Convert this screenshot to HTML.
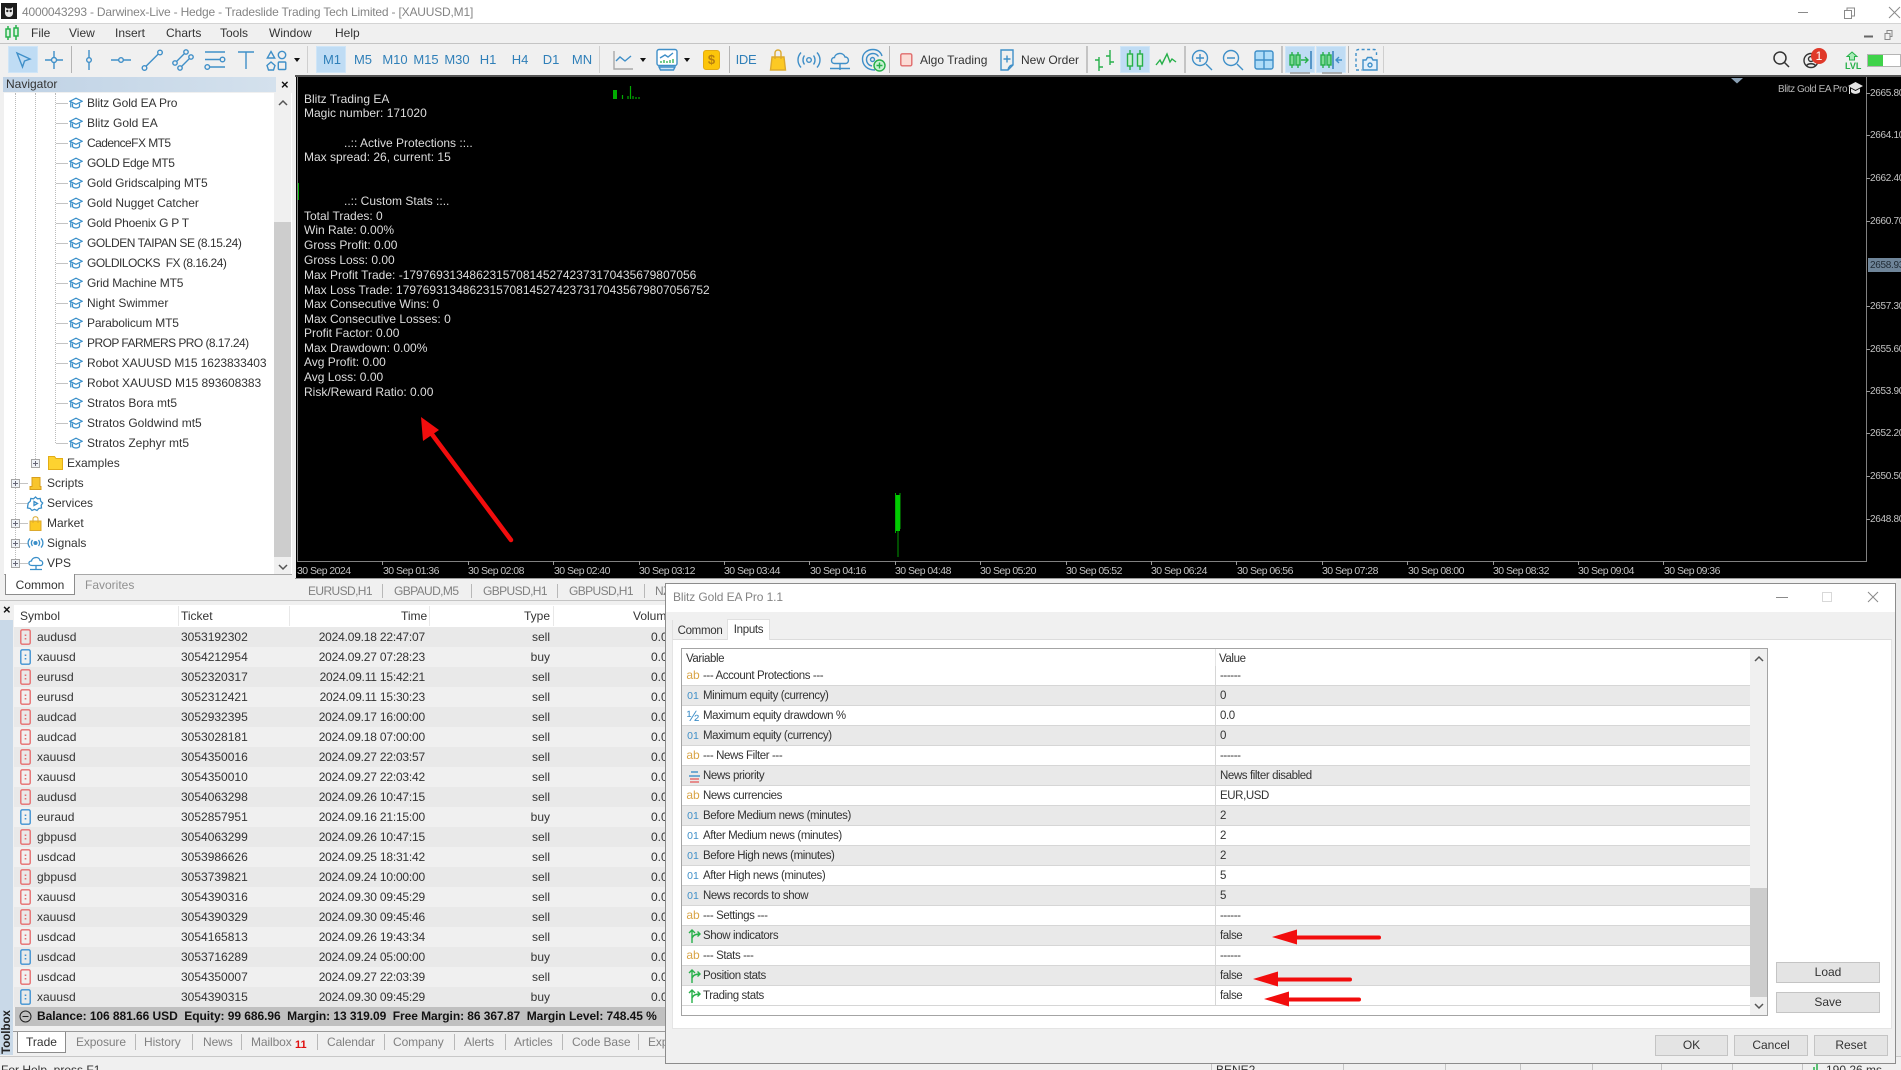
<!DOCTYPE html>
<html><head><meta charset="utf-8"><title>Darwinex-Live</title>
<style>
html,body{margin:0;padding:0;width:1901px;height:1070px;overflow:hidden;background:#f0f0f0}
body{position:relative;font:12px "Liberation Sans",sans-serif;color:#333}
.a,.t,svg.i,svg.j{position:absolute}
.t{white-space:pre;line-height:14px}
svg{overflow:visible}
svg.i{top:48px;width:24px;height:24px;fill:none;stroke:#3f8fc8;stroke-width:1.4}
svg.j{fill:none}
.tf{position:absolute;top:52px;color:#2f7fb8;font-size:13px;line-height:16px;transform:translateX(-50%)}
.m{position:absolute;top:26px;line-height:14px;color:#333}
.hl{position:absolute;top:46px;height:27px;background:#bfdcf4;border:1px solid #cfe5f7;box-sizing:border-box}
.sp{position:absolute;top:46px;height:27px;width:1px;background:#b4b4b4}
.dd{position:absolute;top:58px;width:0;height:0;border:3.5px solid transparent;border-top:4.5px solid #111;border-bottom:0}
.n{position:absolute;left:87px;line-height:14px;white-space:pre;color:#333}
.c{position:absolute;left:69px;width:14px;height:14px;fill:none;stroke:#3a8fc9;stroke-width:1.4}
.ct{position:absolute;left:304px;color:#ddd;line-height:14px;white-space:pre}
.pr{position:absolute;left:1870px;color:#c4c4c4;font-size:10px;letter-spacing:-.3px;line-height:14px;margin-top:1px}
.tk{position:absolute;left:1866px;width:4px;height:1px;background:#999}
.tm{position:absolute;top:564px;color:#c4c4c4;font-size:10.5px;letter-spacing:-.55px;line-height:14px;white-space:pre}
.tv{position:absolute;top:561px;width:1px;height:4px;background:#999}
.ctab{position:absolute;top:584px;color:#808080;line-height:14px;letter-spacing:-.6px}
.cs{position:absolute;top:584px;width:1px;height:14px;background:#b8b8b8}
#tr{position:absolute;left:14px;top:627px;width:660px}
#tr div{position:relative;height:20px;line-height:20px}
#tr div:nth-child(odd){background:#e9e9e9}
#tr svg{position:absolute;left:6px;top:2px;width:11px;height:16px;fill:none;stroke-width:1.4}
#tr .r{stroke:#e66e6e}#tr .b{stroke:#3f92d2}
#tr b,#tr i,#tr u,#tr s,#tr em{position:absolute;font:inherit;text-decoration:none;white-space:pre}
#tr b{left:23px}#tr i{left:167px}#tr u{right:249px;letter-spacing:-.2px}#tr s{right:124px}#tr em{left:637px}
.h{position:absolute;top:609px;line-height:14px;color:#333}
.hs{position:absolute;top:606px;height:20px;width:1px;background:#e8e8e8}
.bt{position:absolute;top:1035px;color:#808080;line-height:14px;letter-spacing:-.1px}
.bs{position:absolute;top:1034px;height:16px;width:1px;background:#b8b8b8}
.st{position:absolute;top:1058px;height:12px;width:1px;background:#c4c4c4}
#dl{position:absolute;left:665px;top:583px;width:1231px;height:481px;background:#f0f0f0;border:1px solid #8c8c8c;box-sizing:border-box}
#rw{position:absolute;left:682px;top:666px;width:1068px}
#rw div{position:relative;height:19px;line-height:21px;border-bottom:1px solid #d6d6d6;color:#333;white-space:pre;font-size:11.5px;letter-spacing:-.4px}
#rw div:nth-child(even){background:#e9e9e9}
#rw span.v{position:absolute;left:533px;top:0;height:20px;border-left:1px solid #d6d6d6;padding-left:4px;width:500px}
#rw span.n2{position:absolute;left:21px;top:0}
#rw span.q{position:absolute;left:4px;top:0;width:14px;font-size:12px;text-align:center;letter-spacing:0}
#rw span.ab{color:#d9a548;font-size:12px;line-height:19px}
#rw span.o1{color:#3f8fc8;font-size:10.5px}
#rw svg{position:absolute;left:5px;top:2px;width:15px;height:16px;fill:none;stroke:#27b04a;stroke-width:1.4}
.btn{position:absolute;background:#e4e4e4;border:1px solid #c4c4c4;box-sizing:border-box;text-align:center;color:#333}
</style></head><body>

<svg width="0" height="0" style="position:absolute"><defs>
<symbol id="cap" viewBox="0 0 16 16"><path d="M1 6L8 2.5 15 6 8 9.5Z"/><path d="M4 8.5v3.7c2 2 6 2 8 0V8.500"/><path d="M2 7v6"/></symbol>
<symbol id="ord" viewBox="0 0 11 16"><rect x=".8" y=".8" width="9.400" height="14.400" rx="1.500"/><path d="M5.500 5.500v1.500M5.500 9v1.500" stroke-width="1.600"/></symbol>
<symbol id="bl" viewBox="0 0 15 16"><path d="M5 15V2M2 5l3-3 3 3"/><path d="M5 10C6 7 9 6 13 6M10.500 3.500L13 6l-2.500 2.500"/></symbol>
<symbol id="pl" viewBox="0 0 9 9"><rect x=".5" y=".5" width="8" height="8" fill="#eef2f7" stroke="#a6a6a6"/><path d="M2 4.500h5M4.500 2v5" stroke="#667"/></symbol>
</defs></svg>

<!-- title bar -->
<div class="a" style="left:0;top:0;width:1901px;height:23px;background:#fff;border-bottom:1px solid #d4d4d4"></div>
<svg class="j" style="left:1px;top:3px" width="16" height="16" viewBox="0 0 16 16"><rect width="16" height="16" fill="#1c1c1c"/><path d="M4 4l2 1.500h4L12 4v6c0 2.500-2 4-4 4s-4-1.500-4-4z" fill="#e8e8e8"/><circle cx="6.300" cy="8" r="1.200" fill="#222"/><circle cx="9.700" cy="8" r="1.200" fill="#222"/></svg>
<div class="t" style="left:22px;top:5px;color:#848484;letter-spacing:-.19px">4000043293 - Darwinex-Live - Hedge - Tradeslide Trading Tech Limited - [XAUUSD,M1]</div>
<svg class="j" style="left:1797px;top:3px" width="104" height="18" stroke="#8a8a8a" stroke-width="1"><path d="M1 9.500h10M47.500 7.500h7v8h-7zM50 7.500v-2.500h7.500v8h-3M92 4l11 11M103 4L92 15"/></svg>

<!-- menu -->
<div class="a" style="left:0;top:43px;width:1901px;height:1px;background:#c4c4c4"></div>
<svg class="j" style="left:4px;top:25px" width="16" height="16" fill="none" stroke="#28b14c" stroke-width="1.500"><path d="M4 1v14M12 0v15"/><rect x="2" y="4" width="4" height="8" fill="#d8f5de"/><rect x="10" y="3" width="4" height="8" fill="#d8f5de"/></svg>
<div class="m" style="left:31px">File</div><div class="m" style="left:69px">View</div><div class="m" style="left:115px">Insert</div><div class="m" style="left:166px">Charts</div><div class="m" style="left:220px">Tools</div><div class="m" style="left:269px">Window</div><div class="m" style="left:335px">Help</div>
<svg class="j" style="left:1863px;top:28px" width="34" height="14" stroke="#666"><path d="M1 8.500h9" stroke-width="2"/><path d="M22 5.500h5v6h-5zM24 5.500v-3h5v6h-2" stroke="#888" stroke-width="1"/></svg>

<!-- toolbar -->
<div class="hl" style="left:8px;width:30px"></div>
<div class="hl" style="left:316px;width:30px"></div>
<div class="hl" style="left:1120px;width:30px"></div>
<div class="hl" style="left:1285px;width:30px"></div>
<div class="hl" style="left:1316px;width:30px"></div>
<div class="sp" style="left:71px"></div><div class="sp" style="left:307px;background:#cfcfcf"></div><div class="sp" style="left:599px;background:#cfcfcf"></div><div class="sp" style="left:729px"></div><div class="sp" style="left:889px"></div><div class="sp" style="left:1086px;background:#c4c4c4;width:2px"></div><div class="sp" style="left:1184px;background:#c4c4c4;width:2px"></div><div class="sp" style="left:1281px;background:#c4c4c4;width:2px"></div><div class="sp" style="left:1348px"></div><div class="sp" style="left:1383px;background:#cfcfcf"></div>

<svg class="i" style="left:11px" viewBox="0 0 24 24"><path d="M6 5l13 6-5.500 2-2 6z"/></svg>
<svg class="i" style="left:42px" viewBox="0 0 24 24"><circle cx="12" cy="12" r="2.500"/><path d="M12 3v6.500M12 14.500V21M3 12h6.500M14.500 12H21"/></svg>
<svg class="i" style="left:77px" viewBox="0 0 24 24"><circle cx="12" cy="12" r="2.300"/><path d="M12 2v7.700M12 14.300V22"/></svg>
<svg class="i" style="left:109px" viewBox="0 0 24 24"><circle cx="12" cy="12" r="2.300"/><path d="M2 12h7.700M14.300 12H22"/></svg>
<svg class="i" style="left:140px" viewBox="0 0 24 24"><circle cx="4.500" cy="20" r="2.300"/><circle cx="20" cy="4.500" r="2.300"/><path d="M6 18.300L18.300 6"/></svg>
<svg class="i" style="left:171px" viewBox="0 0 24 24"><circle cx="4" cy="15" r="2.200"/><circle cx="15" cy="4" r="2.200"/><circle cx="9" cy="20" r="2.200"/><circle cx="20" cy="9" r="2.200"/><path d="M5.500 13.500L13.500 5.500M10.500 18.500L18.500 10.500"/></svg>
<svg class="i" style="left:203px" viewBox="0 0 24 24"><path d="M2 4h20M2 11.500h15M7 19h15"/><circle cx="19.500" cy="11.500" r="2.300"/><circle cx="4.300" cy="19" r="2.300"/></svg>
<svg class="i" style="left:234px" viewBox="0 0 24 24"><path d="M4 4h16M12 4v17"/></svg>
<svg class="i" style="left:264px" viewBox="0 0 24 24"><path d="M7 3.500l3.700 6.500H3.300z"/><circle cx="18" cy="7" r="3.700"/><path d="M7 14l4 3.500-1.500 4.500h-5L3 17.500z"/><rect x="14.300" y="14" width="7.500" height="7.500" rx="1"/></svg>
<div class="dd" style="left:294px"></div>

<div class="tf" style="left:332px">M1</div><div class="tf" style="left:363px">M5</div><div class="tf" style="left:395px">M10</div><div class="tf" style="left:426px">M15</div><div class="tf" style="left:457px">M30</div><div class="tf" style="left:488px">H1</div><div class="tf" style="left:520px">H4</div><div class="tf" style="left:551px">D1</div><div class="tf" style="left:582px">MN</div>

<svg class="i" style="left:612px;stroke:#a8a8a8" viewBox="0 0 24 24"><path d="M2 3v18h19"/><path d="M4 13l4-4 5 4 6-5" stroke="#3f8fc8"/></svg>
<div class="dd" style="left:640px"></div>
<svg class="i" style="left:655px" viewBox="0 0 24 24"><rect x="2" y="1.500" width="20" height="16" rx="2" fill="#fff"/><path d="M4 19h16l-1.500 3h-13z" fill="#cfe4f5"/><path d="M5 10l5-3 3 2 5-4" stroke="#3f8fc8"/><path d="M6 15v-2M9 15v-3M12 15v-2M15 15v-3M18 15v-4" stroke="#38b75a"/></svg>
<div class="dd" style="left:684px"></div>
<svg class="j" style="left:703px;top:50px" width="17" height="20"><rect x=".5" y=".5" width="16" height="19" rx="2.500" fill="#fcc50a" stroke="#e4ab12"/></svg>
<div class="a" style="left:703px;width:17px;top:52px;text-align:center;color:#b67e10;font-weight:bold;font-size:13px;line-height:16px">$</div>
<div class="tf" style="left:746px;font-size:13px;letter-spacing:-.3px">IDE</div>
<svg class="i" style="left:766px;stroke:#dca92d" viewBox="0 0 24 24"><path d="M6 9h12l1.500 13h-15z" fill="#fcc924"/><path d="M9 11V5c0-4 6-4 6 0v6"/></svg>
<svg class="i" style="left:797px" viewBox="0 0 24 24"><circle cx="12" cy="12" r="2.300"/><path d="M7.500 7.500c-2 2.500-2 6.500 0 9M16.500 7.500c2 2.500 2 6.500 0 9M4 4.500c-4 4.500-4 10.500 0 15M20 4.500c4 4.500 4 10.500 0 15"/></svg>
<svg class="i" style="left:828px" viewBox="0 0 24 24"><path d="M6.500 15.500C2.500 15.500 2.500 9.500 6.500 9.500 7 5 15 3.500 17 9c4.500 0 4.500 6.500.5 6.500z"/><path d="M12 15.500V22M2 20.500h20"/></svg>
<svg class="i" style="left:861px" viewBox="0 0 24 24"><path d="M14 22C6 22 1.500 17 1.500 11 1.500 5 6.500 1.500 12 1.500c5 0 8 3 9 6.500M11 18c-3.500-.5-5.500-3.500-5.500-6.500C5.500 8 8.500 5.500 12 5.500c3 0 4.500 1.500 5.500 3"/><circle cx="11.500" cy="11.500" r="2"/><circle cx="18.500" cy="17.500" r="5.500" fill="#c9f2d3" stroke="#27b04a"/><path d="M18.500 14.500v6M15.500 17.500h6" stroke="#27b04a"/></svg>
<svg class="j" style="left:900px;top:53px" width="13" height="14"><rect x=".8" y=".8" width="11" height="12" rx="1.500" fill="#fbdcd6" stroke="#e06c6c" stroke-width="1.400"/></svg>
<div class="t" style="left:920px;top:53px">Algo Trading</div>
<svg class="i" style="left:995px" viewBox="0 0 24 24"><path d="M6 2h12v15l-5 5H6z"/><path d="M13 22c.5-3 2-5 5-5" /><path d="M12 7.500v7M8.500 11h7"/></svg>
<div class="t" style="left:1021px;top:53px">New Order</div>
<svg class="i" style="left:1092px;stroke:#27b04a" viewBox="0 0 24 24"><path d="M7 9v14M7 12H3M7 19h4M18 2v15M14 8h4M18 14h4"/></svg>
<svg class="i" style="left:1123px;stroke:#27b04a" viewBox="0 0 24 24"><path d="M7 2v20M17 2v20"/><rect x="4.500" y="6" width="5" height="12" fill="#c8f0d2"/><rect x="14.500" y="6" width="5" height="12" fill="#c8f0d2"/></svg>
<svg class="i" style="left:1154px;stroke:#27b04a" viewBox="0 0 24 24"><path d="M2 17l4-5 2 4 5-10 3 8 2-3 4 3"/></svg>
<svg class="i" style="left:1190px" viewBox="0 0 24 24"><circle cx="10" cy="10" r="7.500"/><path d="M16 16l6 6M6 10h8M10 6v8"/></svg>
<svg class="i" style="left:1221px" viewBox="0 0 24 24"><circle cx="10" cy="10" r="7.500"/><path d="M16 16l6 6M6 10h8"/></svg>
<svg class="i" style="left:1252px" viewBox="0 0 24 24"><rect x="3" y="3" width="18" height="18" rx="2" fill="#aedcf8"/><path d="M12 3v18M3 12h18"/></svg>
<svg class="i" style="left:1288px" viewBox="0 0 24 24"><path d="M4 4v16M10 4v16" stroke="#27b04a"/><rect x="2" y="7" width="4" height="10" fill="#7ddb95" stroke="#27b04a"/><rect x="8" y="7" width="4" height="10" fill="#7ddb95" stroke="#27b04a"/><path d="M13 12h7M17 9l3 3-3 3" stroke="#27b04a"/><path d="M23 3v18" stroke="#2b78b5"/><path d="M2 25h20" stroke="#999"/></svg>
<svg class="i" style="left:1319px" viewBox="0 0 24 24"><path d="M4 4v16M10 4v16" stroke="#27b04a"/><rect x="2" y="7" width="4" height="10" fill="#7ddb95" stroke="#27b04a"/><rect x="8" y="7" width="4" height="10" fill="#7ddb95" stroke="#27b04a"/><path d="M14 3v18" stroke="#2b78b5"/><path d="M23 12h-6M20 9l-3 3 3 3"/><path d="M3 25h20" stroke="#999"/></svg>
<svg class="i" style="left:1355px" viewBox="0 0 24 24"><path d="M1 19V4c0-1.500 1-2.500 2.500-2.500H19c1.500 0 2.500 1 2.500 2.500v3M1 22h6" stroke-dasharray="3 2.500"/><path d="M8 12h3l1.500-2.500h4L18 12h4v10H8z" fill="#e2f0fb"/><circle cx="15" cy="17" r="2"/></svg>

<svg class="j" style="left:1772px;top:50px" width="20" height="20" stroke="#333" stroke-width="1.500"><circle cx="8" cy="8" r="6"/><path d="M12.500 12.500L17 17"/></svg>
<svg class="j" style="left:1802px;top:52px" width="18" height="18" stroke="#333" stroke-width="1.400"><circle cx="9" cy="8.500" r="7"/><circle cx="9" cy="7" r="2.500"/><path d="M4.500 14c1-3 8-3 9 0"/></svg>
<div class="a" style="left:1811px;top:48px;width:16px;height:16px;border-radius:50%;background:#e0392a;color:#fff;text-align:center;line-height:16px;font-size:12px">1</div>
<svg class="j" style="left:1846px;top:51px" width="12" height="10"><path d="M6 1L11 5.500H8.500V9h-5V5.500H1z" fill="#a9ecb8" stroke="#27b04a"/></svg>
<div class="a" style="left:1845px;top:61px;color:#27b04a;font-size:9px;font-weight:bold;line-height:10px">LVL</div>
<div class="a" style="left:1867px;top:54px;width:34px;height:13px;background:#fff;border:1px solid #b4b4b4;box-sizing:border-box"><div style="width:15px;height:11px;background:#3fd34a"></div></div>

<!-- navigator -->
<div class="a" style="left:3px;top:77px;width:273px;height:15px;background:linear-gradient(to right,#bfd2e5,#d4e1ed)"></div>
<div class="t" style="left:6px;top:77px;color:#333">Navigator</div>
<div class="a" style="left:281px;top:78px;font-weight:bold;font-size:13px;line-height:14px;color:#111">×</div>
<div class="a" style="left:4px;top:93px;width:288px;height:481px;background:#fff"></div>
<div class="a" style="left:15px;top:93px;height:470px;border-left:1px dotted #bbb"></div>
<div class="a" style="left:35px;top:93px;height:370px;border-left:1px dotted #bbb"></div>
<div class="a" style="left:55px;top:93px;height:350px;border-left:1px dotted #bbb"></div>
<div class="a" style="left:56px;top:93px;width:12px;height:360px;background:repeating-linear-gradient(to bottom,transparent 0 10px,#c4c4c4 10px 11px,transparent 11px 20px)"></div>
<div class="a" style="left:16px;top:473px;width:12px;height:100px;background:repeating-linear-gradient(to bottom,transparent 0 10px,#c4c4c4 10px 11px,transparent 11px 20px)"></div>

<div class="n" style="top:96px;letter-spacing:-.1px">Blitz Gold EA Pro</div><svg class="c" style="top:96px"><use href="#cap"/></svg>
<div class="n" style="top:116px">Blitz Gold EA</div><svg class="c" style="top:116px"><use href="#cap"/></svg>
<div class="n" style="top:136px;letter-spacing:-.55px">CadenceFX MT5</div><svg class="c" style="top:136px"><use href="#cap"/></svg>
<div class="n" style="top:156px;letter-spacing:-.4px">GOLD Edge MT5</div><svg class="c" style="top:156px"><use href="#cap"/></svg>
<div class="n" style="top:176px;letter-spacing:-.1px">Gold Gridscalping MT5</div><svg class="c" style="top:176px"><use href="#cap"/></svg>
<div class="n" style="top:196px;letter-spacing:-.05px">Gold Nugget Catcher</div><svg class="c" style="top:196px"><use href="#cap"/></svg>
<div class="n" style="top:216px;letter-spacing:-.25px">Gold Phoenix G P T</div><svg class="c" style="top:216px"><use href="#cap"/></svg>
<div class="n" style="top:236px;letter-spacing:-.45px">GOLDEN TAIPAN SE (8.15.24)</div><svg class="c" style="top:236px"><use href="#cap"/></svg>
<div class="n" style="top:256px;letter-spacing:-.5px">GOLDILOCKS  FX (8.16.24)</div><svg class="c" style="top:256px"><use href="#cap"/></svg>
<div class="n" style="top:276px;letter-spacing:-.15px">Grid Machine MT5</div><svg class="c" style="top:276px"><use href="#cap"/></svg>
<div class="n" style="top:296px">Night Swimmer</div><svg class="c" style="top:296px"><use href="#cap"/></svg>
<div class="n" style="top:316px;letter-spacing:-.15px">Parabolicum MT5</div><svg class="c" style="top:316px"><use href="#cap"/></svg>
<div class="n" style="top:336px;letter-spacing:-.55px">PROP FARMERS PRO (8.17.24)</div><svg class="c" style="top:336px"><use href="#cap"/></svg>
<div class="n" style="top:356px;letter-spacing:-.1px">Robot XAUUSD M15 1623833403</div><svg class="c" style="top:356px"><use href="#cap"/></svg>
<div class="n" style="top:376px;letter-spacing:-.05px">Robot XAUUSD M15 893608383</div><svg class="c" style="top:376px"><use href="#cap"/></svg>
<div class="n" style="top:396px">Stratos Bora mt5</div><svg class="c" style="top:396px"><use href="#cap"/></svg>
<div class="n" style="top:416px">Stratos Goldwind mt5</div><svg class="c" style="top:416px"><use href="#cap"/></svg>
<div class="n" style="top:436px">Stratos Zephyr mt5</div><svg class="c" style="top:436px"><use href="#cap"/></svg>

<svg class="j" style="left:31px;top:459px" width="9" height="9"><use href="#pl"/></svg>
<svg class="j" style="left:48px;top:456px" width="15" height="14"><path d="M.5 13.500V.5h6l1.500 2h6.500v11z" fill="#fdd230" stroke="#e3ad16"/></svg>
<div class="n" style="left:67px;top:456px">Examples</div>
<svg class="j" style="left:11px;top:479px" width="9" height="9"><use href="#pl"/></svg>
<svg class="j" style="left:29px;top:477px" width="13" height="13"><path d="M3 .5h8v9h1v3H1v-3h2z" fill="#f8c52c" stroke="#d89f1c"/></svg>
<div class="n" style="left:47px;top:476px">Scripts</div>
<svg class="j" style="left:28px;top:496px" width="15" height="15" stroke="#3a8fc9" stroke-width="1.300"><path d="M7.500 1l2 1.800 2.700-.3.500 2.700 2 1.800-1.500 2.300.3 2.700-2.700.5-1.800 2-2.500-1.200-2.500 1.200-1.800-2-2.700-.5.300-2.700L.3 7 2.300 5.200l.5-2.700 2.700.3z"/><path d="M6 5.500l3.500 2L6 9.500z"/></svg>
<div class="n" style="left:47px;top:496px">Services</div>
<svg class="j" style="left:11px;top:519px" width="9" height="9"><use href="#pl"/></svg>
<svg class="j" style="left:29px;top:516px" width="13" height="15"><path d="M1 5h11v9.500H1z" fill="#fcc924" stroke="#dca92d"/><path d="M4 7V3c0-3 5-3 5 0v4" stroke="#dca92d"/></svg>
<div class="n" style="left:47px;top:516px">Market</div>
<svg class="j" style="left:11px;top:539px" width="9" height="9"><use href="#pl"/></svg>
<svg class="j" style="left:28px;top:537px" width="15" height="12" stroke="#3a8fc9" stroke-width="1.300"><circle cx="7.500" cy="6" r="1.400" fill="#3a8fc9"/><path d="M4.500 3c-1.500 2-1.500 4 0 6M10.500 3c1.500 2 1.500 4 0 6M2 1.500C-.500 4-.500 8 2 10.500M13 1.500c2.500 2.500 2.500 6.500 0 9"/></svg>
<div class="n" style="left:47px;top:536px">Signals</div>
<svg class="j" style="left:11px;top:559px" width="9" height="9"><use href="#pl"/></svg>
<svg class="j" style="left:28px;top:556px" width="16" height="15" stroke="#3a8fc9" stroke-width="1.300"><path d="M4 9.500C0 9.500 0 5 3.500 5 4 1 11 0 12 4.500c3.500 0 3.500 5 .5 5z"/><path d="M8 9.500V14M2 13.500h12"/></svg>
<div class="n" style="left:47px;top:556px">VPS</div>

<!-- nav scrollbar -->
<div class="a" style="left:274px;top:93px;width:17px;height:481px;background:#f0f0f0"></div>
<div class="a" style="left:274px;top:222px;width:17px;height:335px;background:#cdcdcd"></div>
<svg class="j" style="left:278px;top:99px" width="10" height="8" stroke="#555" stroke-width="1.500"><path d="M1 6l4-4 4 4"/></svg>
<svg class="j" style="left:278px;top:563px" width="10" height="8" stroke="#555" stroke-width="1.500"><path d="M1 2l4 4 4-4"/></svg>
<div class="a" style="left:4px;top:574px;width:288px;height:1px;background:#a8a8a8"></div>
<div class="a" style="left:0;top:575px;width:295px;height:25px;background:#f0f0f0"></div>
<div class="a" style="left:5px;top:574px;width:70px;height:21px;background:#fff;border:1px solid #8c8c8c;border-top:0;box-sizing:border-box;text-align:center;line-height:22px">Common</div>
<div class="t" style="left:85px;top:578px;color:#909090">Favorites</div>

<!-- chart -->
<div class="a" style="left:295px;top:75px;width:1606px;height:2px;background:#555"></div>
<div class="a" style="left:296px;top:77px;width:1605px;height:502px;background:#000"></div>
<div class="a" style="left:297px;top:77px;width:1px;height:484px;background:#808080"></div>
<div class="a" style="left:1866px;top:77px;width:1px;height:485px;background:#808080"></div>
<div class="a" style="left:297px;top:561px;width:1570px;height:1px;background:#808080"></div>
<div class="a" style="left:295px;top:578px;width:1606px;height:1px;background:#999"></div>

<div class="ct" style="top:92px">Blitz Trading EA</div>
<div class="ct" style="top:106px">Magic number: 171020</div>
<div class="ct" style="top:136px">            ..:: Active Protections ::..</div>
<div class="ct" style="top:150px">Max spread: 26, current: 15</div>
<div class="ct" style="top:194px">            ..:: Custom Stats ::..</div>
<div class="ct" style="top:209px">Total Trades: 0</div>
<div class="ct" style="top:223px">Win Rate: 0.00%</div>
<div class="ct" style="top:238px">Gross Profit: 0.00</div>
<div class="ct" style="top:253px">Gross Loss: 0.00</div>
<div class="ct" style="top:268px">Max Profit Trade: -17976931348623157081452742373170435679807056</div>
<div class="ct" style="top:283px">Max Loss Trade: 17976931348623157081452742373170435679807056752</div>
<div class="ct" style="top:297px">Max Consecutive Wins: 0</div>
<div class="ct" style="top:312px">Max Consecutive Losses: 0</div>
<div class="ct" style="top:326px">Profit Factor: 0.00</div>
<div class="ct" style="top:341px">Max Drawdown: 0.00%</div>
<div class="ct" style="top:355px">Avg Profit: 0.00</div>
<div class="ct" style="top:370px">Avg Loss: 0.00</div>
<div class="ct" style="top:385px">Risk/Reward Ratio: 0.00</div>

<!-- candles -->
<svg class="j" style="left:298px;top:77px" width="700" height="490">
<path d="M.5 106v17" stroke="#0a0"/>
<path d="M324.500 18v4M332.500 9v13M330 19v3M335 19v3M338 20v2M341 20v2" stroke="#0a0" stroke-width="1.200"/>
<rect x="315" y="13" width="4" height="9" fill="#0a0"/>
<path d="M597.500 416v40M602 416v36" stroke="#0a0"/><rect x="598" y="418" width="4" height="36" fill="#0c0"/><path d="M600 454v26" stroke="#090"/>
</svg>

<svg class="j" style="left:1730px;top:78px" width="14" height="6"><path d="M1 0h12L7 5.500z" fill="#8aa0b4"/></svg>
<div class="a" style="left:1778px;top:83px;color:#b4b4b4;font-size:10px;letter-spacing:-.45px;line-height:14px">Blitz Gold EA Pro</div>
<svg class="j" style="left:1848px;top:81px" width="15" height="14"><path d="M0 5L7.500 1 15 5 7.500 9z" fill="#e4e4e4"/><path d="M3 7.500v3.500c2 2.500 7 2.500 9 0V7.500L7.500 10z" fill="#e4e4e4"/><path d="M1.500 6v7" stroke="#e4e4e4"/></svg>

<div class="tk" style="top:93px"></div><div class="pr" style="top:86px">2665.80</div>
<div class="tk" style="top:135px"></div><div class="pr" style="top:128px">2664.10</div>
<div class="tk" style="top:178px"></div><div class="pr" style="top:171px">2662.40</div>
<div class="tk" style="top:221px"></div><div class="pr" style="top:214px">2660.70</div>
<div class="a" style="left:1868px;top:258px;width:33px;height:14px;background:#6f8599"></div><div class="pr" style="top:258px;color:#1f2a33">2658.93</div>
<div class="tk" style="top:306px"></div><div class="pr" style="top:299px">2657.30</div>
<div class="tk" style="top:349px"></div><div class="pr" style="top:342px">2655.60</div>
<div class="tk" style="top:391px"></div><div class="pr" style="top:384px">2653.90</div>
<div class="tk" style="top:433px"></div><div class="pr" style="top:426px">2652.20</div>
<div class="tk" style="top:476px"></div><div class="pr" style="top:469px">2650.50</div>
<div class="tk" style="top:519px"></div><div class="pr" style="top:512px">2648.80</div>

<div class="tm" style="left:297px">30 Sep 2024</div>
<div class="tv" style="left:382px"></div><div class="tm" style="left:383px">30 Sep 01:36</div>
<div class="tv" style="left:468px"></div><div class="tm" style="left:468px">30 Sep 02:08</div>
<div class="tv" style="left:553px"></div><div class="tm" style="left:554px">30 Sep 02:40</div>
<div class="tv" style="left:639px"></div><div class="tm" style="left:639px">30 Sep 03:12</div>
<div class="tv" style="left:724px"></div><div class="tm" style="left:724px">30 Sep 03:44</div>
<div class="tv" style="left:809px"></div><div class="tm" style="left:810px">30 Sep 04:16</div>
<div class="tv" style="left:895px"></div><div class="tm" style="left:895px">30 Sep 04:48</div>
<div class="tv" style="left:980px"></div><div class="tm" style="left:980px">30 Sep 05:20</div>
<div class="tv" style="left:1066px"></div><div class="tm" style="left:1066px">30 Sep 05:52</div>
<div class="tv" style="left:1151px"></div><div class="tm" style="left:1151px">30 Sep 06:24</div>
<div class="tv" style="left:1236px"></div><div class="tm" style="left:1237px">30 Sep 06:56</div>
<div class="tv" style="left:1322px"></div><div class="tm" style="left:1322px">30 Sep 07:28</div>
<div class="tv" style="left:1407px"></div><div class="tm" style="left:1408px">30 Sep 08:00</div>
<div class="tv" style="left:1493px"></div><div class="tm" style="left:1493px">30 Sep 08:32</div>
<div class="tv" style="left:1578px"></div><div class="tm" style="left:1578px">30 Sep 09:04</div>
<div class="tv" style="left:1663px"></div><div class="tm" style="left:1664px">30 Sep 09:36</div>

<!-- chart tabs -->
<div class="ctab" style="left:308px">EURUSD,H1</div><div class="cs" style="left:382px"></div>
<div class="ctab" style="left:394px">GBPAUD,M5</div><div class="cs" style="left:471px"></div>
<div class="ctab" style="left:483px">GBPUSD,H1</div><div class="cs" style="left:557px"></div>
<div class="ctab" style="left:569px">GBPUSD,H1</div><div class="cs" style="left:644px"></div>
<div class="ctab" style="left:655px">NZ</div>

<!-- red arrow -->
<svg class="j" style="left:400px;top:405px;z-index:3" width="130" height="150"><path d="M111 135L28 24" stroke="#f20d0d" stroke-width="4.500" stroke-linecap="round"/><path d="M21 12l18 13-16 11z" fill="#f20d0d"/></svg>

<!-- toolbox -->
<div class="a" style="left:0;top:600px;width:680px;height:1px;background:#c4c4c4"></div>
<div class="a" style="left:3px;top:603px;font-weight:bold;font-size:13px;line-height:14px;color:#111">×</div>
<div class="a" style="left:0;top:620px;width:13px;height:435px;background:#c9d9e8"></div>
<div class="a" style="left:-18px;top:1025px;width:50px;height:14px;transform:rotate(-90deg);font-weight:bold;font-size:11.500px;line-height:14px;text-align:center;color:#222">Toolbox</div>
<div class="a" style="left:14px;top:605px;width:660px;height:22px;background:#fff"></div>
<div class="h" style="left:20px">Symbol</div><div class="h" style="left:181px">Ticket</div><div class="h" style="left:401px">Time</div><div class="h" style="left:524px">Type</div><div class="h" style="left:633px">Volume</div>
<div class="hs" style="left:178px"></div><div class="hs" style="left:289px"></div><div class="hs" style="left:429px"></div><div class="hs" style="left:553px"></div>
<div id="tr">
<div><svg class="r"><use href="#ord"/></svg><b>audusd</b><i>3053192302</i><u>2024.09.18 22:47:07</u><s>sell</s><em>0.01</em></div>
<div><svg class="b"><use href="#ord"/></svg><b>xauusd</b><i>3054212954</i><u>2024.09.27 07:28:23</u><s>buy</s><em>0.01</em></div>
<div><svg class="r"><use href="#ord"/></svg><b>eurusd</b><i>3052320317</i><u>2024.09.11 15:42:21</u><s>sell</s><em>0.01</em></div>
<div><svg class="r"><use href="#ord"/></svg><b>eurusd</b><i>3052312421</i><u>2024.09.11 15:30:23</u><s>sell</s><em>0.01</em></div>
<div><svg class="r"><use href="#ord"/></svg><b>audcad</b><i>3052932395</i><u>2024.09.17 16:00:00</u><s>sell</s><em>0.01</em></div>
<div><svg class="r"><use href="#ord"/></svg><b>audcad</b><i>3053028181</i><u>2024.09.18 07:00:00</u><s>sell</s><em>0.01</em></div>
<div><svg class="r"><use href="#ord"/></svg><b>xauusd</b><i>3054350016</i><u>2024.09.27 22:03:57</u><s>sell</s><em>0.01</em></div>
<div><svg class="r"><use href="#ord"/></svg><b>xauusd</b><i>3054350010</i><u>2024.09.27 22:03:42</u><s>sell</s><em>0.01</em></div>
<div><svg class="r"><use href="#ord"/></svg><b>audusd</b><i>3054063298</i><u>2024.09.26 10:47:15</u><s>sell</s><em>0.01</em></div>
<div><svg class="b"><use href="#ord"/></svg><b>euraud</b><i>3052857951</i><u>2024.09.16 21:15:00</u><s>buy</s><em>0.01</em></div>
<div><svg class="r"><use href="#ord"/></svg><b>gbpusd</b><i>3054063299</i><u>2024.09.26 10:47:15</u><s>sell</s><em>0.01</em></div>
<div><svg class="r"><use href="#ord"/></svg><b>usdcad</b><i>3053986626</i><u>2024.09.25 18:31:42</u><s>sell</s><em>0.01</em></div>
<div><svg class="r"><use href="#ord"/></svg><b>gbpusd</b><i>3053739821</i><u>2024.09.24 10:00:00</u><s>sell</s><em>0.01</em></div>
<div><svg class="r"><use href="#ord"/></svg><b>xauusd</b><i>3054390316</i><u>2024.09.30 09:45:29</u><s>sell</s><em>0.01</em></div>
<div><svg class="r"><use href="#ord"/></svg><b>xauusd</b><i>3054390329</i><u>2024.09.30 09:45:46</u><s>sell</s><em>0.01</em></div>
<div><svg class="r"><use href="#ord"/></svg><b>usdcad</b><i>3054165813</i><u>2024.09.26 19:43:34</u><s>sell</s><em>0.01</em></div>
<div><svg class="b"><use href="#ord"/></svg><b>usdcad</b><i>3053716289</i><u>2024.09.24 05:00:00</u><s>buy</s><em>0.01</em></div>
<div><svg class="r"><use href="#ord"/></svg><b>usdcad</b><i>3054350007</i><u>2024.09.27 22:03:39</u><s>sell</s><em>0.01</em></div>
<div><svg class="b"><use href="#ord"/></svg><b>xauusd</b><i>3054390315</i><u>2024.09.30 09:45:29</u><s>buy</s><em>0.01</em></div>
</div>
<div class="a" style="left:15px;top:1007px;width:660px;height:19px;background:#c0c0c0"></div>
<svg class="j" style="left:19px;top:1010px" width="13" height="13" stroke="#222"><circle cx="6.500" cy="6.500" r="5.500"/><path d="M3.500 6.500h6"/></svg>
<div class="t" style="left:37px;top:1009px;font-weight:bold;color:#111;letter-spacing:-.06px">Balance: 106 881.66 USD  Equity: 99 686.96  Margin: 13 319.09  Free Margin: 86 367.87  Margin Level: 748.45 %</div>
<div class="a" style="left:17px;top:1032px;width:49px;height:21px;background:#fff;border:1px solid #8c8c8c;border-top:0;box-sizing:border-box;text-align:center;line-height:20px;border-left-color:#8c8c8c">Trade</div>
<div class="a" style="left:13px;top:1031px;width:670px;height:1px;background:#9a9a9a"></div>
<div class="bt" style="left:76px">Exposure</div><div class="bs" style="left:135px"></div>
<div class="bt" style="left:144px">History</div><div class="bs" style="left:192px"></div>
<div class="bt" style="left:203px">News</div><div class="bs" style="left:241px"></div>
<div class="bt" style="left:251px">Mailbox</div><div class="a" style="left:295px;top:1039px;color:#e01010;font-weight:bold;font-size:11px;line-height:12px">11</div><div class="bs" style="left:317px"></div>
<div class="bt" style="left:327px">Calendar</div><div class="bs" style="left:384px"></div>
<div class="bt" style="left:393px">Company</div><div class="bs" style="left:454px"></div>
<div class="bt" style="left:464px">Alerts</div><div class="bs" style="left:505px"></div>
<div class="bt" style="left:514px">Articles</div><div class="bs" style="left:562px"></div>
<div class="bt" style="left:572px">Code Base</div><div class="bs" style="left:638px"></div>
<div class="bt" style="left:648px">Exp</div>
<div class="a" style="left:0;top:1056px;width:1901px;height:1px;background:#c8c8c8"></div>

<!-- status -->
<div class="t" style="left:1px;top:1063px;color:#333">For Help, press F1</div>
<div class="st" style="left:1211px"></div><div class="st" style="left:1343px"></div><div class="st" style="left:1445px"></div><div class="st" style="left:1520px"></div><div class="st" style="left:1592px"></div><div class="st" style="left:1661px"></div><div class="st" style="left:1732px"></div><div class="st" style="left:1802px"></div>
<div class="t" style="left:1216px;top:1063px">BENE2</div>
<svg class="j" style="left:1812px;top:1062px" width="8" height="8" stroke="#27b04a" stroke-width="1.500"><path d="M2 8V5M5 8V1"/></svg>
<div class="t" style="left:1826px;top:1063px">190.26 ms</div>

<!-- dialog -->
<div class="a" style="left:1896px;top:580px;width:5px;height:476px;background:#eaeaea"></div>
<div id="dl"></div>
<div class="a" style="left:666px;top:584px;width:1229px;height:28px;background:#fff"></div>
<div class="t" style="left:673px;top:590px;color:#848484;letter-spacing:-.1px">Blitz Gold EA Pro 1.1</div>
<svg class="j" style="left:1775px;top:590px" width="106" height="14" stroke="#8a8a8a"><path d="M1 7.500h12" /><path d="M47.500 2.500h9v9h-9z" stroke="#d8d8d8"/><path d="M93 2l10 10M103 2L93 12"/></svg>
<div class="a" style="left:672px;top:639px;width:1220px;height:390px;background:#fff;border:1px solid #e4e4e4;border-top-color:#dcdcdc;box-sizing:border-box"></div>
<div class="a" style="left:672px;top:620px;width:55px;height:19px;background:#f0f0f0;text-align:center;line-height:22px;border-left:1px solid #e0e0e0;box-sizing:border-box;font-size:11.5px;letter-spacing:-.3px">Common</div>
<div class="a" style="left:727px;top:619px;width:43px;height:21px;background:#fff;text-align:center;line-height:20px;border:1px solid #e0e0e0;border-bottom:0;box-sizing:border-box;font-size:11.5px;letter-spacing:-.3px">Inputs</div>

<div class="a" style="left:681px;top:648px;width:1087px;height:368px;background:#fff;border:1px solid #a4a4a4;box-sizing:border-box"></div>
<div class="t" style="left:686px;top:652px;font-size:11.5px;letter-spacing:-.4px">Variable</div><div class="t" style="left:1219px;top:652px;font-size:11.5px;letter-spacing:-.4px">Value</div>
<div class="a" style="left:1215px;top:649px;width:1px;height:17px;background:#e4e4e4"></div>
<div id="rw">
<div><span class="q ab">ab</span><span class="n2">--- Account Protections ---</span><span class="v">------</span></div>
<div><span class="q o1">01</span><span class="n2">Minimum equity (currency)</span><span class="v">0</span></div>
<div><span class="q" style="color:#3f8fc8;font-size:15px">½</span><span class="n2">Maximum equity drawdown %</span><span class="v">0.0</span></div>
<div><span class="q o1">01</span><span class="n2">Maximum equity (currency)</span><span class="v">0</span></div>
<div><span class="q ab">ab</span><span class="n2">--- News Filter ---</span><span class="v">------</span></div>
<div><svg viewBox="0 0 15 16" stroke-width="2" style="stroke:#3f8fc8"><path d="M2 8h11"/><path d="M4 4h7" /><path d="M3 11h9M3 14h9" style="stroke:#e66e6e"/></svg><span class="n2">News priority</span><span class="v">News filter disabled</span></div>
<div><span class="q ab">ab</span><span class="n2">News currencies</span><span class="v">EUR,USD</span></div>
<div><span class="q o1">01</span><span class="n2">Before Medium news (minutes)</span><span class="v">2</span></div>
<div><span class="q o1">01</span><span class="n2">After Medium news (minutes)</span><span class="v">2</span></div>
<div><span class="q o1">01</span><span class="n2">Before High news (minutes)</span><span class="v">2</span></div>
<div><span class="q o1">01</span><span class="n2">After High news (minutes)</span><span class="v">5</span></div>
<div><span class="q o1">01</span><span class="n2">News records to show</span><span class="v">5</span></div>
<div><span class="q ab">ab</span><span class="n2">--- Settings ---</span><span class="v">------</span></div>
<div><svg><use href="#bl"/></svg><span class="n2">Show indicators</span><span class="v">false</span></div>
<div><span class="q ab">ab</span><span class="n2">--- Stats ---</span><span class="v">------</span></div>
<div><svg><use href="#bl"/></svg><span class="n2">Position stats</span><span class="v">false</span></div>
<div><svg><use href="#bl"/></svg><span class="n2">Trading stats</span><span class="v">false</span></div>
</div>
<div class="a" style="left:1750px;top:649px;width:17px;height:366px;background:#f0f0f0"></div>
<div class="a" style="left:1750px;top:888px;width:17px;height:109px;background:#cdcdcd"></div>
<svg class="j" style="left:1754px;top:655px" width="10" height="8" stroke="#555" stroke-width="1.500"><path d="M1 6l4-4 4 4"/></svg>
<svg class="j" style="left:1754px;top:1002px" width="10" height="8" stroke="#555" stroke-width="1.500"><path d="M1 2l4 4 4-4"/></svg>

<div class="btn" style="left:1776px;top:962px;width:104px;height:21px;line-height:19px">Load</div>
<div class="btn" style="left:1776px;top:992px;width:104px;height:21px;line-height:19px">Save</div>
<div class="btn" style="left:1655px;top:1035px;width:73px;height:21px;line-height:19px">OK</div>
<div class="btn" style="left:1734px;top:1035px;width:74px;height:21px;line-height:19px">Cancel</div>
<div class="btn" style="left:1814px;top:1035px;width:74px;height:21px;line-height:19px">Reset</div>

<svg class="j" style="left:1250px;top:925px;z-index:3" width="120" height="85" stroke="#f20d0d" stroke-width="4" stroke-linecap="round"><path d="M44 12.500h85"/><path d="M22 12l25-7.500v15z" fill="#f20d0d" stroke="none"/><path d="M26 54.500h74"/><path d="M3 54l25-7.500v15z" fill="#f20d0d" stroke="none"/><path d="M36 74.500h73"/><path d="M14 74l25-7.500v15z" fill="#f20d0d" stroke="none"/></svg>

</body></html>
